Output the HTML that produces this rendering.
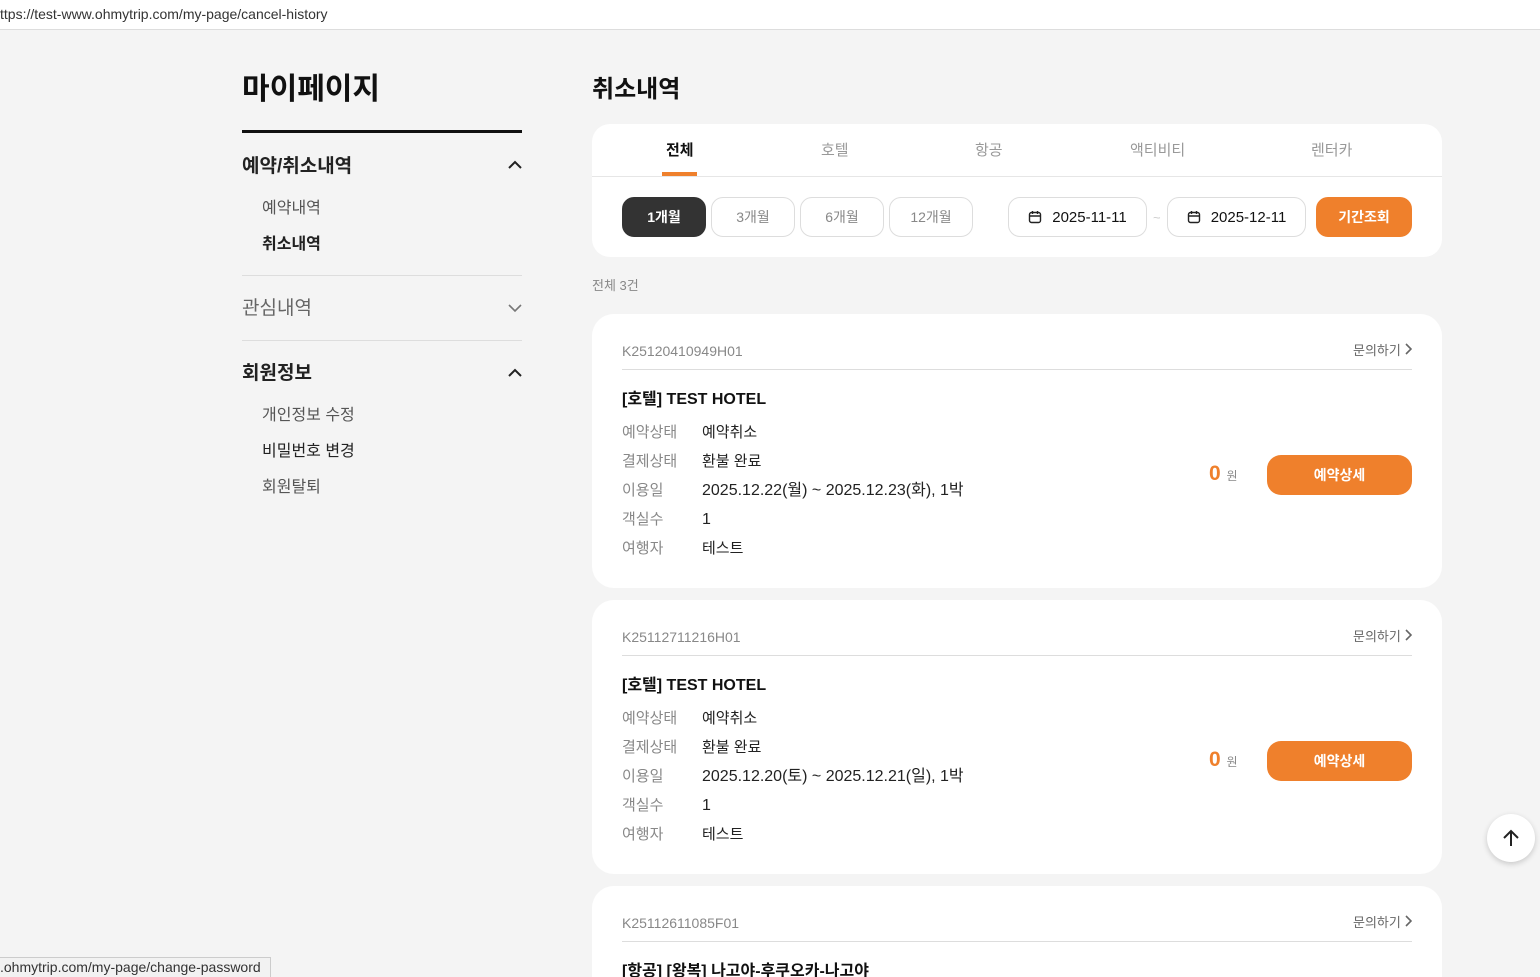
<!DOCTYPE html>
<html style="width:1540px;height:977px;overflow:hidden"><head><meta charset="utf-8"><style>
*{margin:0;padding:0;box-sizing:border-box}
body{width:1540px;height:977px;overflow:hidden;background:#f4f4f4;font-family:"Liberation Sans","Noto Sans CJK KR",sans-serif;color:#222;position:relative}
.a{position:absolute;white-space:nowrap;line-height:1.35}
.url{position:absolute;left:0;top:0;width:1540px;height:30px;background:#fff;border-bottom:1px solid #ddd;font-size:14px;color:#333;padding:6px 0 0 0}
.card{position:absolute;left:592px;width:850px;background:#fff;border-radius:22px}
.btn{position:absolute;top:73px;height:40px;border:1px solid #ddd;border-radius:12px;font-size:14px;color:#888;display:flex;align-items:center;justify-content:center;background:#fff}
.lbl{color:#888;font-size:15px}
.val{font-size:15px;color:#222}
</style></head><body>
<div class="url">ttps://test-www.ohmytrip.com/my-page/cancel-history</div>

<div class="a" style="left:242px;top:70px;font-size:30px;font-weight:bold;color:#111">마이페이지</div>
<div class="a" style="left:242px;top:130px;width:280px;height:3px;background:#111"></div>
<div class="a" style="left:242px;top:154px;font-size:19px;font-weight:bold">예약/취소내역</div>
<svg class="a" style="left:507px;top:159px" width="16" height="12"><path d="M2 9L8 3L14 9" stroke="#222" stroke-width="2" fill="none"/></svg>
<div class="a" style="left:262px;top:198px;font-size:16px;color:#555">예약내역</div>
<div class="a" style="left:262px;top:234px;font-size:16px;font-weight:bold;color:#222">취소내역</div>
<div class="a" style="left:242px;top:275px;width:280px;height:1px;background:#ddd"></div>
<div class="a" style="left:242px;top:296px;font-size:19px;color:#666">관심내역</div>
<svg class="a" style="left:507px;top:302px" width="16" height="12"><path d="M2 3L8 9L14 3" stroke="#777" stroke-width="1.6" fill="none"/></svg>
<div class="a" style="left:242px;top:340px;width:280px;height:1px;background:#ddd"></div>
<div class="a" style="left:242px;top:361px;font-size:19px;font-weight:bold">회원정보</div>
<svg class="a" style="left:507px;top:367px" width="16" height="12"><path d="M2 9L8 3L14 9" stroke="#222" stroke-width="2" fill="none"/></svg>
<div class="a" style="left:262px;top:405px;font-size:16px;color:#555">개인정보 수정</div>
<div class="a" style="left:262px;top:441px;font-size:16px;color:#222">비밀번호 변경</div>
<div class="a" style="left:262px;top:477px;font-size:16px;color:#555">회원탈퇴</div>

<div class="a" style="left:592px;top:74px;font-size:24px;font-weight:bold;color:#111">취소내역</div>

<div class="card" style="top:124px;height:133px;border-radius:18px">
 <div class="a" style="left:74px;top:17px;font-size:15px;font-weight:bold;color:#111">전체</div>
 <div class="a" style="left:70px;top:48px;width:35px;height:4px;background:#ef802c"></div>
 <div class="a" style="left:229px;top:17px;font-size:15px;color:#999">호텔</div>
 <div class="a" style="left:383px;top:17px;font-size:15px;color:#999">항공</div>
 <div class="a" style="left:538px;top:17px;font-size:15px;color:#999">액티비티</div>
 <div class="a" style="left:719px;top:17px;font-size:15px;color:#999">렌터카</div>
 <div class="a" style="left:0;top:52px;width:850px;height:1px;background:#e6e6e6"></div>
 <div class="btn" style="left:30px;width:84px;background:#333;border-color:#333;color:#fff;font-weight:bold">1개월</div>
 <div class="btn" style="left:119px;width:84px">3개월</div>
 <div class="btn" style="left:208px;width:84px">6개월</div>
 <div class="btn" style="left:297px;width:84px">12개월</div>
 <div class="btn" style="left:416px;width:139px;color:#111;font-size:15px"><svg width="14" height="14" style="margin-right:10px"><rect x="1.5" y="2.5" width="11" height="10" rx="2" stroke="#222" stroke-width="1.4" fill="none"/><path d="M1.5 6h11M4.5 1v3M9.5 1v3" stroke="#222" stroke-width="1.4"/></svg>2025-11-11</div>
 <div class="a" style="left:561px;top:85px;color:#ccc;font-size:13px">~</div>
 <div class="btn" style="left:575px;width:139px;color:#111;font-size:15px"><svg width="14" height="14" style="margin-right:10px"><rect x="1.5" y="2.5" width="11" height="10" rx="2" stroke="#222" stroke-width="1.4" fill="none"/><path d="M1.5 6h11M4.5 1v3M9.5 1v3" stroke="#222" stroke-width="1.4"/></svg>2025-12-11</div>
 <div class="btn" style="left:724px;width:96px;background:#ef802c;border-color:#ef802c;color:#fff;font-weight:bold">기간조회</div>
</div>

<div class="a" style="left:592px;top:277px;font-size:13px;color:#888">전체 3건</div>

<div class="card" style="top:314px;height:274px">
 <div class="a" style="left:30px;top:28px;font-size:14px;color:#888">K25120410949H01</div>
 <div class="a" style="left:761px;top:28px;font-size:13px;color:#666">문의하기 <svg width="8" height="12"><path d="M2 1l5 5-5 5" stroke="#666" stroke-width="1.6" fill="none"/></svg></div>
 <div class="a" style="left:30px;top:55px;width:790px;height:1px;background:#ddd"></div>
 <div class="a" style="left:30px;top:75px;font-size:16px;font-weight:bold;color:#111">[호텔] TEST HOTEL</div>
 <div class="a lbl" style="left:30px;top:109px">예약상태</div><div class="a val" style="left:110px;top:109px">예약취소</div>
 <div class="a lbl" style="left:30px;top:138px">결제상태</div><div class="a val" style="left:110px;top:138px">환불 완료</div>
 <div class="a lbl" style="left:30px;top:167px">이용일</div><div class="a val" style="left:110px;top:166px;font-size:16px">2025.12.22(월) ~ 2025.12.23(화), 1박</div>
 <div class="a lbl" style="left:30px;top:196px">객실수</div><div class="a val" style="left:110px;top:195px;font-size:16px">1</div>
 <div class="a lbl" style="left:30px;top:225px">여행자</div><div class="a val" style="left:110px;top:225px">테스트</div>
 <div class="a" style="left:617px;top:146px;font-size:21px;font-weight:bold;color:#ef802c">0 <span style="font-size:12px;color:#888;font-weight:normal">원</span></div>
 <div class="a" style="left:675px;top:141px;width:145px;height:40px;border-radius:14px;background:#ef802c;color:#fff;font-size:14px;font-weight:bold;display:flex;align-items:center;justify-content:center">예약상세</div>
</div>

<div class="card" style="top:600px;height:274px">
 <div class="a" style="left:30px;top:28px;font-size:14px;color:#888">K25112711216H01</div>
 <div class="a" style="left:761px;top:28px;font-size:13px;color:#666">문의하기 <svg width="8" height="12"><path d="M2 1l5 5-5 5" stroke="#666" stroke-width="1.6" fill="none"/></svg></div>
 <div class="a" style="left:30px;top:55px;width:790px;height:1px;background:#ddd"></div>
 <div class="a" style="left:30px;top:75px;font-size:16px;font-weight:bold;color:#111">[호텔] TEST HOTEL</div>
 <div class="a lbl" style="left:30px;top:109px">예약상태</div><div class="a val" style="left:110px;top:109px">예약취소</div>
 <div class="a lbl" style="left:30px;top:138px">결제상태</div><div class="a val" style="left:110px;top:138px">환불 완료</div>
 <div class="a lbl" style="left:30px;top:167px">이용일</div><div class="a val" style="left:110px;top:166px;font-size:16px">2025.12.20(토) ~ 2025.12.21(일), 1박</div>
 <div class="a lbl" style="left:30px;top:196px">객실수</div><div class="a val" style="left:110px;top:195px;font-size:16px">1</div>
 <div class="a lbl" style="left:30px;top:225px">여행자</div><div class="a val" style="left:110px;top:225px">테스트</div>
 <div class="a" style="left:617px;top:146px;font-size:21px;font-weight:bold;color:#ef802c">0 <span style="font-size:12px;color:#888;font-weight:normal">원</span></div>
 <div class="a" style="left:675px;top:141px;width:145px;height:40px;border-radius:14px;background:#ef802c;color:#fff;font-size:14px;font-weight:bold;display:flex;align-items:center;justify-content:center">예약상세</div>
</div>

<div class="card" style="top:886px;height:91px;border-bottom-left-radius:0;border-bottom-right-radius:0;overflow:hidden">
 <div class="a" style="left:30px;top:28px;font-size:14px;color:#888">K25112611085F01</div>
 <div class="a" style="left:761px;top:28px;font-size:13px;color:#666">문의하기 <svg width="8" height="12"><path d="M2 1l5 5-5 5" stroke="#666" stroke-width="1.6" fill="none"/></svg></div>
 <div class="a" style="left:30px;top:55px;width:790px;height:1px;background:#ddd"></div>
 <div class="a" style="left:30px;top:75px;font-size:16px;font-weight:bold;color:#111">[항공] [왕복] 나고야-후쿠오카-나고야</div>
</div>

<div class="a" style="left:1487px;top:814px;width:48px;height:48px;border-radius:50%;background:#fff;box-shadow:0 2px 6px rgba(0,0,0,.18);display:flex;align-items:center;justify-content:center"><svg width="20" height="20"><path d="M10 18V3M3 10l7-7 7 7" stroke="#222" stroke-width="2" fill="none"/></svg></div>

<div class="a" style="left:0;top:957px;width:271px;height:20px;padding:1px 6px 0 0;background:#f2f2f2;border:1px solid #ccc;border-left:none;border-bottom:none;font-size:14px;color:#333;line-height:1.2">.ohmytrip.com/my-page/change-password</div>
</body></html>
